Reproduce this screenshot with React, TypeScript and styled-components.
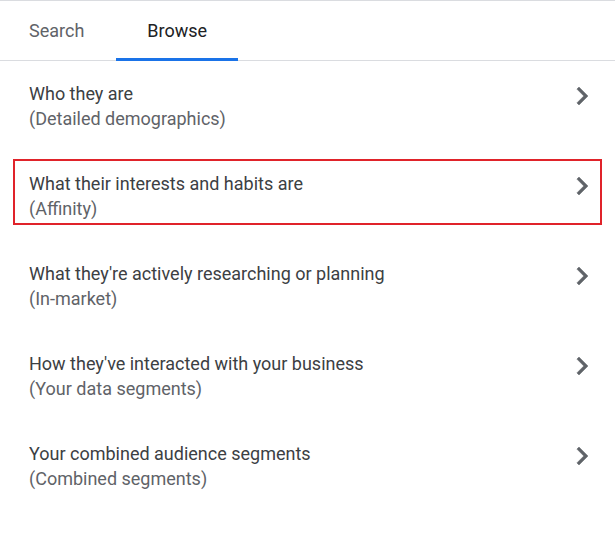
import React from 'react';
import styled, { createGlobalStyle } from 'styled-components';

const GlobalStyle = createGlobalStyle`
    html, body {
        margin: 0;
        padding: 0;
        background: #ffffff;
    }
    body {
        font-family: Roboto, 'Liberation Sans', Arial, sans-serif;
    }
`;

const Panel = styled.div`
    width: 615px;
    height: 537px;
    background: #ffffff;
    display: flex;
    flex-direction: column;
`;

const TabBar = styled.div`
    display: flex;
    align-items: stretch;
    height: 59px;
    border-top: 1px solid #dadce0;
    border-bottom: 1px solid #dadce0;
`;

const Tab = styled.button<{ $active?: boolean }>`
    position: relative;
    display: flex;
    align-items: center;
    justify-content: center;
    padding: ${(p) => (p.$active ? '0 31px' : '0 32px 0 29px')};
    border: none;
    background: transparent;
    font-family: Roboto, 'Liberation Sans', Arial, sans-serif;
    font-size: 18px;
    font-weight: 400;
    color: ${(p) => (p.$active ? '#202124' : '#5f6368')};
    cursor: pointer;

    &::after {
        content: '';
        position: absolute;
        left: 0;
        right: 0;
        bottom: -1px;
        height: 3px;
        background: ${(p) => (p.$active ? '#1a73e8' : 'transparent')};
    }
`;

const List = styled.div`
    display: flex;
    flex-direction: column;
`;

const Row = styled.div<{ $highlight?: boolean }>`
    position: relative;
    height: 90px;
    display: flex;
    align-items: center;
    justify-content: space-between;
    padding: 0 15px 0 29px;
    box-sizing: border-box;
    cursor: pointer;

    &::after {
        content: '';
        display: ${(p) => (p.$highlight ? 'block' : 'none')};
        position: absolute;
        left: 13px;
        right: 13px;
        top: 8px;
        bottom: 16px;
        border: 2px solid #e0232a;
        pointer-events: none;
    }
`;

const Texts = styled.div`
    display: flex;
    flex-direction: column;
`;

const Title = styled.span`
    font-size: 18px;
    line-height: 25px;
    color: #3c4043;
`;

const Subtitle = styled.span`
    font-size: 18px;
    line-height: 25px;
    color: #5f6368;
`;

const Chevron = styled.svg`
    width: 36px;
    height: 36px;
    fill: #5f6368;
    stroke: #5f6368;
    stroke-width: 0.3;
    flex-shrink: 0;
    margin-bottom: 20px;
`;

const items = [
    { title: 'Who they are', sub: '(Detailed demographics)' },
    { title: 'What their interests and habits are', sub: '(Affinity)', highlight: true },
    { title: "What they're actively researching or planning", sub: '(In-market)' },
    { title: "How they've interacted with your business", sub: '(Your data segments)' },
    { title: 'Your combined audience segments', sub: '(Combined segments)' },
];

const App = () => {
    return (
        <>
            <GlobalStyle />
            <Panel>
                <TabBar>
                    <Tab>Search</Tab>
                    <Tab $active>Browse</Tab>
                </TabBar>
                <List>
                    {items.map((item) => (
                        <Row key={item.title} $highlight={item.highlight}>
                            <Texts>
                                <Title>{item.title}</Title>
                                <Subtitle>{item.sub}</Subtitle>
                            </Texts>
                            <Chevron viewBox="0 0 24 24">
                                <path d="M10 6L8.59 7.41 13.17 12l-4.58 4.59L10 18l6-6z" />
                            </Chevron>
                        </Row>
                    ))}
                </List>
            </Panel>
        </>
    );
};

export default App;
